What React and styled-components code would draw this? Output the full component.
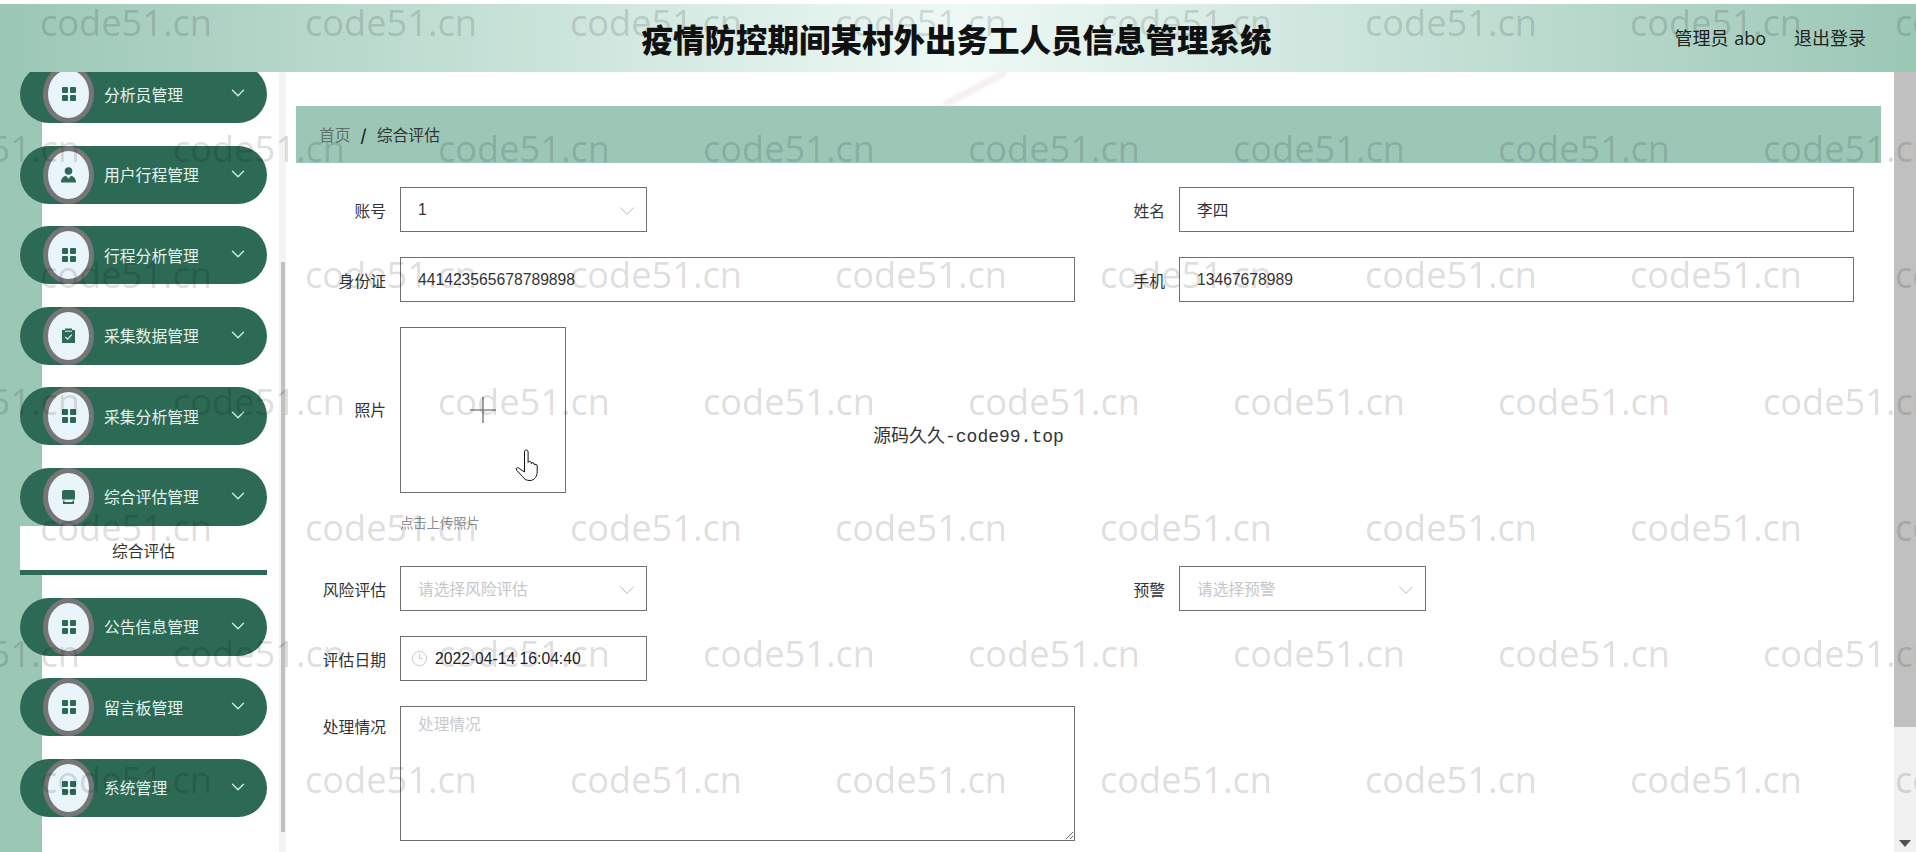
import React from 'react';
import styled, { createGlobalStyle } from 'styled-components';
import { ChevronDown, Clock3 } from 'lucide-react';

const cjk = '"Noto Sans CJK SC", "Liberation Sans", sans-serif';
const latin = '"Liberation Sans", "Noto Sans CJK SC", sans-serif';

const GlobalStyle = createGlobalStyle`
  html, body {
    margin: 0;
    padding: 0;
    height: 100%;
    overflow: hidden;
    background: #fff;
    font-family: ${cjk};
    color: #333;
  }
`;

const Page = styled.div`
  position: relative;
  width: 1916px;
  height: 852px;
  padding-top: 4px;
  box-sizing: border-box;
  overflow: hidden;
  background: #fff;
`;

const Header = styled.header`
  height: 68px;
  box-sizing: border-box;
  display: grid;
  grid-template-columns: 1fr auto 1fr;
  align-items: center;
  background: linear-gradient(90deg, #9bc7b5 0%, #eef9f6 50%, #9bc7b5 100%);
`;

const Title = styled.h1`
  grid-column: 2;
  margin: 0 3px 0 0;
  font-size: 31.5px;
  font-weight: 900;
  color: #111;
  white-space: nowrap;
`;

const UserBox = styled.div`
  justify-self: end;
  display: flex;
  gap: 28px;
  margin: -3px 50px 0 0;
  font-size: 18px;
  color: #222;
`;

const UserName = styled.span`
  margin-left: 1.5px;
  font-family: "Open Sans", ${cjk};
  font-size: 18px;
`;

const Body = styled.div`
  display: flex;
  height: 780px;
`;

const Sidebar = styled.aside`
  flex: none;
  width: 286px;
  display: flex;
  overflow: hidden;
  background: linear-gradient(90deg, #9bc7b5 42px, #fff 42px);
`;

const MenuList = styled.nav`
  width: 279px;
  padding-left: 20px;
  box-sizing: border-box;
  display: flex;
  flex-direction: column;
  gap: 22.5px;
  margin-top: -6.8px;
`;

const MenuGroup = styled.div`
  width: 247px;
`;

const Pill = styled.div`
  height: 58px;
  display: flex;
  align-items: center;
  border-radius: 29px;
  background: #2d6a55;
  color: #e6f4ec;
`;

const IconCircle = styled.span`
  flex: none;
  width: 51px;
  height: 58px;
  margin-left: 23px;
  box-sizing: border-box;
  border: 5px solid #767676;
  border-radius: 50%;
  background: #eaf5fb;
  display: flex;
  align-items: center;
  justify-content: center;
`;

const PillLabel = styled.span`
  margin-left: 10px;
  padding-top: 1px;
  font-size: 15.8px;
  line-height: 20px;
`;

const PillChevron = styled(ChevronDown)`
  margin-left: auto;
  margin-right: 18px;
  margin-top: -2px;
  color: #c9eadb;
`;

const SubItem = styled.div`
  height: 49.4px;
  box-sizing: border-box;
  padding-top: 6px;
  border-bottom: 5px solid #2d6a55;
  display: flex;
  align-items: center;
  justify-content: center;
  background: #fff;
  font-size: 15.8px;
  color: #333;
`;

const SideTrack = styled.div`
  width: 7px;
  background: #f3f3f3;
`;

const SideThumb = styled.div`
  width: 4px;
  height: 570px;
  margin: 190px 0 0 2px;
  background: #c0c0c0;
`;

const Main = styled.main`
  position: relative;
  flex: 1;
  padding: 34px 13px 0 10px;
  min-width: 0;
`;

const Streak = styled.svg`
  position: absolute;
  left: 650px;
  top: 0;
  filter: blur(1.5px);
`;

const Breadcrumb = styled.div`
  position: relative;
  height: 57px;
  padding-left: 23px;
  display: flex;
  align-items: center;
  gap: 10px;
  background: #9cc7b7;
  font-size: 15.8px;
  color: #333;
`;

const CrumbHome = styled.span`
  color: #5f7168;
`;

const CrumbSep = styled.b`
  color: #222;
`;

const Form = styled.form`
  position: relative;
  width: 1558px;
  padding-top: 24px;
  display: grid;
  grid-template-columns: 779px 779px;
  row-gap: 25px;
`;

const Field = styled.div`
  display: flex;
  align-items: ${p => (p.$top ? 'flex-start' : 'center')};
`;

const WideField = styled(Field)`
  grid-column: 1 / -1;
`;

const Label = styled.label`
  flex: none;
  width: 90px;
  margin-right: 14px;
  padding-top: 2px;
  text-align: right;
  font-size: 15.8px;
  line-height: 43px;
  color: #333;
`;

const boxStyle = `
  height: 45px;
  box-sizing: border-box;
  border: 1px solid #707070;
  background: transparent;
  font-size: 15.7px;
  color: #333;
`;

const TextInput = styled.input`
  ${boxStyle}
  width: 675px;
  padding: 0 17px;
  font-family: ${latin};
  outline: none;
`;

const SelectBox = styled.div`
  ${boxStyle}
  width: 247px;
  padding: 0 17px;
  display: flex;
  align-items: center;
  justify-content: space-between;
`;

const SelectValue = styled.span`
  font-family: ${latin};
  color: ${p => (p.$placeholder ? '#c4c6c9' : '#333')};
`;

const SelectArrow = styled(ChevronDown)`
  flex: none;
  margin-right: -11px;
  margin-top: 3px;
  color: #b4b8c0;
`;

const DateBox = styled(SelectBox)`
  justify-content: flex-start;
  gap: 7px;
  padding-left: 10px;
`;

const ClockIcon = styled(Clock3)`
  flex: none;
  color: #c0c4cc;
`;

const DateText = styled.span`
  font-family: ${latin};
  color: #222;
`;

const UploadColumn = styled.div`
  display: flex;
  flex-direction: column;
`;

const UploadBox = styled.div`
  position: relative;
  width: 166px;
  height: 166px;
  box-sizing: border-box;
  border: 1px solid #707070;
  display: flex;
  align-items: center;
  justify-content: center;
`;

const PlusIcon = styled.svg`
  color: #8a8a8a;
`;

const HandCursor = styled.svg`
  position: absolute;
  left: 114px;
  top: 121px;
`;

const UploadHint = styled.div`
  margin-top: 21px;
  height: 27px;
  line-height: 18px;
  font-size: 13.3px;
  color: #8a8f98;
`;

const PhotoLabel = styled(Label)`
  height: 166px;
  padding-top: 0;
  line-height: 166px;
`;

const NoteLabel = styled(Label)`
  padding-top: 0;
  line-height: 42px;
`;

const NoteArea = styled.textarea`
  width: 675px;
  height: 135px;
  box-sizing: border-box;
  padding: 7px 17px;
  border: 1px solid #707070;
  border-radius: 0;
  background: transparent;
  outline: none;
  display: block;
  font-family: ${cjk};
  font-size: 15.7px;
  line-height: 20px;
  &::placeholder {
    color: #c8cacd;
  }
`;

const PageBar = styled.div`
  flex: none;
  width: 22px;
  display: flex;
  flex-direction: column;
  background: #f1f1f1;
`;

const PageThumb = styled.div`
  height: 655px;
  background: #c0c0c0;
`;

const PageArrow = styled.div`
  margin: auto auto 5px;
  width: 0;
  height: 0;
  border-left: 6px solid transparent;
  border-right: 6px solid transparent;
  border-top: 7px solid #505050;
`;

const Watermarks = styled.div`
  position: absolute;
  inset: 0;
  z-index: 5;
  overflow: hidden;
  pointer-events: none;
  padding-top: 2px;
  display: flex;
  flex-direction: column;
  gap: 86.2px;
`;

const MarkRow = styled.div`
  display: flex;
  margin-left: ${p => (p.$shift ? '-92px' : '40px')};
`;

const Mark = styled.span`
  flex: none;
  width: 265px;
  font-family: "Open Sans", sans-serif;
  font-size: 36.2px;
  line-height: 40px;
  color: rgba(0, 0, 0, 0.15);
`;

const SiteNote = styled.div`
  position: absolute;
  left: 873px;
  top: 424px;
  z-index: 6;
  font-family: "Liberation Mono", ${cjk}, monospace;
  font-size: 18px;
  line-height: 26px;
  color: #333;
  white-space: nowrap;
`;

const GridIcon = () => (
  <svg width="14" height="14" viewBox="0 0 14 14" fill="#2d6a55">
    <rect x="0" y="0" width="6" height="6" rx="1" />
    <rect x="8" y="0" width="6" height="6" rx="1" />
    <rect x="0" y="8" width="6" height="6" rx="1" />
    <rect x="8" y="8" width="6" height="6" rx="1" />
  </svg>
);

const PersonIcon = () => (
  <svg width="15" height="16" viewBox="0 0 15 16" fill="#2d6a55">
    <circle cx="7.5" cy="4" r="3.8" />
    <path d="M0 15.500c0-4 2.400-6.500 5-6.800l2.500 3 2.500-3c2.600.3 5 2.800 5 6.800z" />
  </svg>
);

const ClipboardIcon = () => (
  <svg width="13" height="15" viewBox="0 0 13 15">
    <path fill="#2d6a55" d="M0 2h3V.5h7V2h3v13H0z" />
    <path fill="none" stroke="#eaf5fb" strokeWidth="1.200" d="M3.300 8.800l2.300 2.300 4.200-4.500" />
    <path fill="none" stroke="#eaf5fb" strokeWidth="1" d="M3 3.200h7" />
  </svg>
);

const TrayIcon = () => (
  <svg width="13" height="14" viewBox="0 0 13 14" fill="#2d6a55">
    <path d="M2 0h9a2 2 0 0 1 2 2v7.500H0V2a2 2 0 0 1 2-2z" />
    <path d="M1 10.500h1.500v1.500h8v-1.500H12v3.500H1z" />
  </svg>
);

const menus = [
  { name: '分析员管理', icon: <GridIcon /> },
  { name: '用户行程管理', icon: <PersonIcon /> },
  { name: '行程分析管理', icon: <GridIcon /> },
  { name: '采集数据管理', icon: <ClipboardIcon /> },
  { name: '采集分析管理', icon: <GridIcon /> },
  { name: '综合评估管理', icon: <TrayIcon />, sub: '综合评估' },
  { name: '公告信息管理', icon: <GridIcon /> },
  { name: '留言板管理', icon: <GridIcon /> },
  { name: '系统管理', icon: <GridIcon /> },
];

function App() {
  return (
    <Page>
      <GlobalStyle />
      <Header>
        <Title>疫情防控期间某村外出务工人员信息管理系统</Title>
        <UserBox>
          <span>管理员 <UserName>abo</UserName></span>
          <span>退出登录</span>
        </UserBox>
      </Header>
      <Body>
        <Sidebar>
          <MenuList>
            {menus.map(m => (
              <MenuGroup key={m.name}>
                <Pill>
                  <IconCircle>{m.icon}</IconCircle>
                  <PillLabel>{m.name}</PillLabel>
                  <PillChevron size={22} strokeWidth={1.600} />
                </Pill>
                {m.sub && <SubItem>{m.sub}</SubItem>}
              </MenuGroup>
            ))}
          </MenuList>
          <SideTrack>
            <SideThumb />
          </SideTrack>
        </Sidebar>
        <Main>
          <Streak width="80" height="34" viewBox="0 0 80 34">
            <path d="M70 0L8 33" stroke="#f4eff1" strokeWidth="7" fill="none" />
          </Streak>
          <Breadcrumb>
            <CrumbHome>首页</CrumbHome>
            <CrumbSep>/</CrumbSep>
            <span>综合评估</span>
          </Breadcrumb>
          <Form>
            <Field>
              <Label>账号</Label>
              <SelectBox>
                <SelectValue>1</SelectValue>
                <SelectArrow size={26} strokeWidth={0.900} />
              </SelectBox>
            </Field>
            <Field>
              <Label>姓名</Label>
              <TextInput readOnly value="李四" />
            </Field>
            <Field>
              <Label>身份证</Label>
              <TextInput readOnly value="441423565678789898" />
            </Field>
            <Field>
              <Label>手机</Label>
              <TextInput readOnly value="13467678989" />
            </Field>
            <WideField $top>
              <PhotoLabel>照片</PhotoLabel>
              <UploadColumn>
                <UploadBox>
                  <PlusIcon width="26" height="26" viewBox="0 0 26 26">
                    <path d="M0 13h26M13 0v26" stroke="currentColor" strokeWidth="1.600" />
                  </PlusIcon>
                  <HandCursor width="26" height="33" viewBox="0 0 26 33">
                    <path
                      fill="#fff"
                      stroke="#111"
                      strokeWidth="1"
                      d="M9.500 3c0-1.300.8-2 1.800-2s1.800.7 1.800 2v10.500c.4-1.500 3-1.500 3.200.3l.1.900c.4-1.400 2.800-1.300 3 .4l.1 1c.5-1.200 2.600-1 2.700.7v6c0 4-2.500 8.700-7.200 8.700-3.500 0-5.600-1-7.500-4L1.500 21c-1-1.500.5-3 2-2l6 4z"
                    />
                  </HandCursor>
                </UploadBox>
                <UploadHint>点击上传照片</UploadHint>
              </UploadColumn>
            </WideField>
            <Field>
              <Label>风险评估</Label>
              <SelectBox>
                <SelectValue $placeholder>请选择风险评估</SelectValue>
                <SelectArrow size={26} strokeWidth={0.900} />
              </SelectBox>
            </Field>
            <Field>
              <Label>预警</Label>
              <SelectBox>
                <SelectValue $placeholder>请选择预警</SelectValue>
                <SelectArrow size={26} strokeWidth={0.900} />
              </SelectBox>
            </Field>
            <WideField>
              <Label>评估日期</Label>
              <DateBox>
                <ClockIcon size={17} strokeWidth={1.300} />
                <DateText>2022-04-14 16:04:40</DateText>
              </DateBox>
            </WideField>
            <WideField $top>
              <NoteLabel>处理情况</NoteLabel>
              <NoteArea placeholder="处理情况" />
            </WideField>
          </Form>
        </Main>
        <PageBar>
          <PageThumb />
          <PageArrow />
        </PageBar>
      </Body>
      <Watermarks>
        {Array.from({ length: 7 }, (_, r) => (
          <MarkRow key={r} $shift={r % 2 === 1}>
            {Array.from({ length: 9 }, (_, c) => (
              <Mark key={c}>code51.cn</Mark>
            ))}
          </MarkRow>
        ))}
      </Watermarks>
      <SiteNote>源码久久-code99.top</SiteNote>
    </Page>
  );
}

export default App;
